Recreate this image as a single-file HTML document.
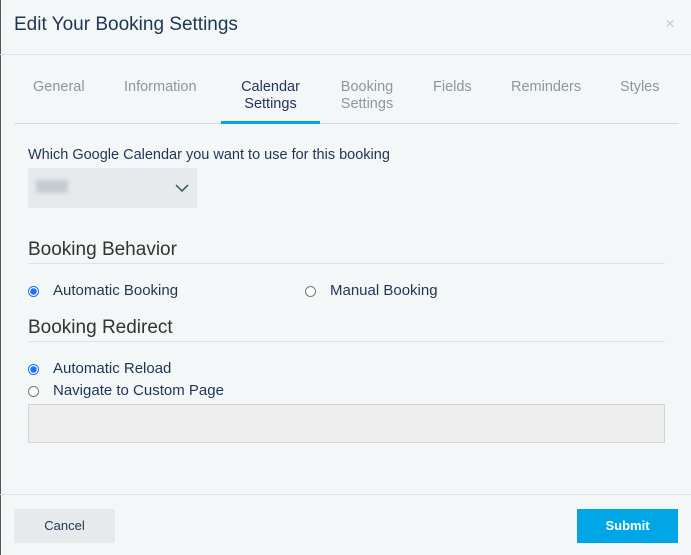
<!DOCTYPE html>
<html><head><style>
*{margin:0;padding:0;box-sizing:border-box}
body{width:691px;height:555px;background:#f4f7f8;font-family:"Liberation Sans",sans-serif;color:#1e3553;position:relative;overflow:hidden}
.a{position:absolute;white-space:nowrap}
.tab{position:absolute;font-size:14.5px;color:#8a97a3;text-align:center;line-height:17px}
.r{position:absolute;width:11px;height:11px;border-radius:50%;border:1px solid #777;background:#fff}
.r.on{border:1px solid #1a73e8;background:radial-gradient(circle,#1a73e8 3px,#fff 3.5px)}
.lbl{font-size:15px;color:#1e3553}
.h{font-size:19px;color:#333}
.line{position:absolute;height:1px;background:#dde2e6}
</style></head><body>
<div class="a" style="left:0;top:0;width:1px;height:555px;background:#555"></div>
<div class="a" style="left:14px;top:14px;font-size:19px;color:#1e3553">Edit Your Booking Settings</div>
<div class="a" style="left:665px;top:14px;font-size:17px;color:#c5ccd2">×</div>
<div class="line" style="left:0;top:54px;width:691px"></div>
<div class="tab" style="left:33px;top:79px">General</div>
<div class="tab" style="left:124px;top:79px">Information</div>
<div class="tab" style="left:227px;top:79px;width:87px;color:#1e3553">Calendar<br>Settings</div>
<div class="tab" style="left:336px;top:79px;width:62px">Booking<br>Settings</div>
<div class="tab" style="left:433px;top:79px">Fields</div>
<div class="tab" style="left:511px;top:79px">Reminders</div>
<div class="tab" style="left:620px;top:79px">Styles</div>
<div class="line" style="left:14px;top:123px;width:665px;background:#d4dae0"></div>
<div class="a" style="left:221px;top:121px;width:99px;height:3px;background:#00a6e6"></div>
<div class="a lbl" style="left:28px;top:147px;font-size:14.5px">Which Google Calendar you want to use for this booking</div>
<div class="a" style="left:28px;top:168px;width:169px;height:40px;background:#e6eaec"></div>
<div class="a" style="left:36px;top:180px;width:32px;height:13px;background:#c4cbd0;filter:blur(2px)"></div>
<svg class="a" style="left:175px;top:184px" width="14" height="9"><path d="M1 1l6 6 6-6" stroke="#2d5a3d" stroke-width="1.5" fill="none"/></svg>
<div class="a h" style="left:28px;top:239px">Booking Behavior</div>
<div class="line" style="left:28px;top:263px;width:637px"></div>
<div class="r on" style="left:28px;top:286px"></div>
<div class="a lbl" style="left:53px;top:282px">Automatic Booking</div>
<div class="r" style="left:305px;top:286px"></div>
<div class="a lbl" style="left:330px;top:282px">Manual Booking</div>
<div class="a h" style="left:28px;top:317px">Booking Redirect</div>
<div class="line" style="left:28px;top:341px;width:637px"></div>
<div class="r on" style="left:28px;top:364px"></div>
<div class="a lbl" style="left:53px;top:360px">Automatic Reload</div>
<div class="r" style="left:28px;top:386px"></div>
<div class="a lbl" style="left:53px;top:382px">Navigate to Custom Page</div>
<div class="a" style="left:28px;top:404px;width:637px;height:39px;background:#eeeeee;border:1px solid #d0d5d9"></div>
<div class="line" style="left:0;top:494px;width:691px"></div>
<div class="a" style="left:14px;top:509px;width:101px;height:34px;background:#e6eaec;font-size:13px;line-height:34px;text-align:center;color:#1e3553">Cancel</div>
<div class="a" style="left:577px;top:509px;width:101px;height:34px;background:#00a6e6;font-size:13px;line-height:34px;text-align:center;color:#fff;font-weight:bold">Submit</div>
</body></html>
